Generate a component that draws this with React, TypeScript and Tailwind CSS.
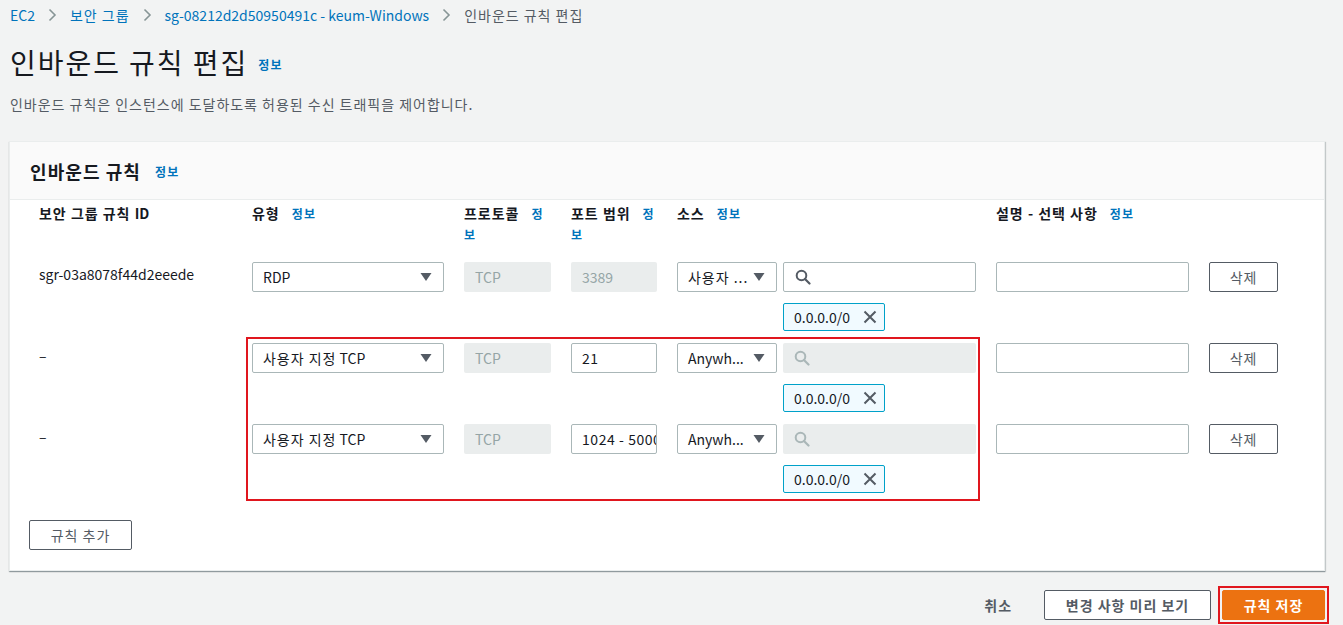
import React from 'react';

// hangul in the reference is set wider than Noto's, so Korean runs get a little tracking
const ko = 'tracking-[0.07em]';

type Rule = {
  id: string;
  type: React.ReactNode;
  port: string;
  portLocked: boolean;
  source: React.ReactNode;
  searchLocked: boolean;
};

const customTcp = (
  <>
    <span className="tracking-[0.07em]">사용자 지정</span> TCP
  </>
);

const rules: Rule[] = [
  { id: 'sgr-03a8078f44d2eeede', type: 'RDP', port: '3389', portLocked: true, source: <span className="tracking-[0.07em]">사용자 ...</span>, searchLocked: false },
  { id: '–', type: customTcp, port: '21', portLocked: false, source: 'Anywh...', searchLocked: true },
  { id: '–', type: customTcp, port: '1024 - 5000', portLocked: false, source: 'Anywh...', searchLocked: true },
];

function Info({ className = '', text = '정보' }: { className?: string; text?: string }) {
  return <span className={`text-[12px] font-bold text-[#0073bb] tracking-[0.1em] ${className}`}>{text}</span>;
}

function Chevron() {
  return (
    <svg width="9" height="14" viewBox="0 0 9 14" className="shrink-0">
      <polyline points="1.5,1.5 7,7 1.5,12.5" fill="none" stroke="#879596" strokeWidth="1.6" />
    </svg>
  );
}

function Caret() {
  return (
    <svg width="12" height="10" viewBox="0 0 12 10" className="shrink-0">
      <polygon points="0.5,1 11.5,1 6,9" fill="#545b64" />
    </svg>
  );
}

function SearchIcon({ color }: { color: string }) {
  return (
    <svg width="16" height="16" viewBox="0 0 16 16" className="shrink-0">
      <circle cx="6.5" cy="6.5" r="4.8" fill="none" stroke={color} strokeWidth="2" />
      <line x1="10" y1="10" x2="14.5" y2="14.5" stroke={color} strokeWidth="2.2" strokeLinecap="round" />
    </svg>
  );
}

function XIcon() {
  return (
    <svg width="14" height="14" viewBox="0 0 14 14" className="shrink-0">
      <path d="M1.5 1.5 L12.5 12.5 M12.5 1.5 L1.5 12.5" stroke="#545b64" strokeWidth="2" fill="none" />
    </svg>
  );
}

function Select({ label, width }: { label: React.ReactNode; width: string }) {
  return (
    <div className={`${width} h-[30px] flex items-center justify-between pl-[10px] pr-[11px] bg-white border border-[#aab7b8] rounded-[2px] text-[14px] text-[#16191f] whitespace-nowrap`}>
      <span>{label}</span>
      <Caret />
    </div>
  );
}

function Token() {
  return (
    <div className="mt-[11px] ml-[106px] w-[102px] h-[28px] flex items-center justify-between pl-[10px] pr-[7px] bg-[#f1faff] border border-[#00a1c9] rounded-[2px] text-[14px] text-[#16191f]">
      <span>0.0.0.0/0</span>
      <XIcon />
    </div>
  );
}

function RuleRow({ rule }: { rule: Rule }) {
  return (
    <div className="grid grid-cols-[203px_192px_87px_86px_299px_193px_69px] gap-x-5 items-start">
      <div className="pl-[10px] pt-[2px] text-[14px] leading-[20px] text-[#16191f]">{rule.id}</div>
      <Select label={rule.type} width="w-[192px]" />
      <div className="h-[30px] flex items-center pl-[11px] bg-[#eaeded] rounded-[2px] text-[14px] text-[#95a5a6]">TCP</div>
      {rule.portLocked ? (
        <div className="h-[30px] flex items-center pl-[11px] bg-[#eaeded] rounded-[2px] text-[14px] text-[#95a5a6]">{rule.port}</div>
      ) : (
        <div className="h-[30px] flex items-center pl-[10px] bg-white border border-[#aab7b8] rounded-[2px] text-[14px] text-[#16191f] whitespace-nowrap overflow-hidden tracking-[0.04em]">
          {rule.port}
        </div>
      )}
      <div className="flex flex-col">
        <div className="flex gap-[6px]">
          <Select label={rule.source} width="w-[100px]" />
          {rule.searchLocked ? (
            <div className="w-[193px] h-[30px] flex items-center pl-[11px] bg-[#eaeded] rounded-[2px]">
              <SearchIcon color="#aab7b8" />
            </div>
          ) : (
            <div className="w-[193px] h-[30px] flex items-center pl-[11px] bg-white border border-[#aab7b8] rounded-[2px]">
              <SearchIcon color="#545b64" />
            </div>
          )}
        </div>
        <Token />
      </div>
      <div className="h-[30px] bg-white border border-[#aab7b8] rounded-[2px]" />
      <button className={`h-[30px] bg-white border border-[#545b64] rounded-[2px] text-[14px] text-[#545b64] ${ko}`}>삭제</button>
    </div>
  );
}

export default function App() {
  return (
    <div className="min-h-screen bg-[#f2f3f3] pl-[9px] pr-[18px] font-['Noto_Sans_CJK_KR','Noto_Sans',sans-serif] text-[#16191f]">
      <nav className="pt-[5px] h-[25px] flex items-center gap-[13px] text-[14px] leading-[20px]">
        <span className="pl-[1px] text-[#0073bb]">EC2</span>
        <Chevron />
        <span className={`text-[#0073bb] ${ko}`}>보안 그룹</span>
        <Chevron />
        <span className="text-[#0073bb]">sg-08212d2d50950491c - keum-Windows</span>
        <Chevron />
        <span className={`text-[#545b64] ${ko}`}>인바운드 규칙 편집</span>
      </nav>

      <div className="mt-[17px] h-[40px] flex items-center pl-[1px]">
        <h1 className={`text-[28px] leading-[40px] font-normal ${ko}`}>인바운드 규칙 편집</h1>
        <Info className="ml-[10px] mt-[6px]" />
      </div>
      <p className={`mt-[12px] pl-[1px] text-[14px] leading-[20px] text-[#545b64] ${ko}`}>
        인바운드 규칙은 인스턴스에 도달하도록 허용된 수신 트래픽을 제어합니다.
      </p>

      <section className="mt-[27px] bg-white border border-[#eaeded] shadow-[0_1px_1px_0_rgba(0,28,36,0.3),1px_1px_1px_0_rgba(0,28,36,0.15)]">
        <header className="h-[58px] flex items-center pl-[20px] bg-[#fafafa] border-b border-[#eaeded]">
          <h2 className="text-[18px] font-bold leading-[24px] tracking-[0.06em]">인바운드 규칙</h2>
          <Info className="ml-[14px] mt-[2px]" />
        </header>

        <div className="pl-[19px] pt-[3px] pb-[20px]">
          <div className={`grid grid-cols-[203px_192px_87px_86px_299px_193px_69px] gap-x-5 text-[14px] leading-[20px] font-bold ${ko}`}>
            <div className="pl-[10px]">
              보안 그룹 규칙 <span className="tracking-normal">ID</span>
            </div>
            <div>
              유형<Info className="ml-[12px]" />
            </div>
            <div>
              프로토콜<Info className="ml-[12px]" text="정" />
              <br />
              <Info text="보" />
            </div>
            <div>
              포트 범위<Info className="ml-[12px]" text="정" />
              <br />
              <Info text="보" />
            </div>
            <div>
              소스<Info className="ml-[12px]" />
            </div>
            <div>
              설명 - 선택 사항<Info className="ml-[12px]" />
            </div>
            <div />
          </div>

          <div className="mt-[17px] flex flex-col gap-[12px]">
            <RuleRow rule={rules[0]} />
            <div className="relative flex flex-col gap-[12px]">
              <RuleRow rule={rules[1]} />
              <RuleRow rule={rules[2]} />
              <div className="absolute left-[217px] -top-[6px] -bottom-[8px] w-[734px] border-2 border-[#e0161e] pointer-events-none" />
            </div>
          </div>

          <button className={`mt-[27px] w-[103px] h-[30px] bg-white border border-[#545b64] rounded-[2px] text-[14px] text-[#545b64] ${ko}`}>
            규칙 추가
          </button>
        </div>
      </section>

      <footer className={`mt-[19px] flex justify-end items-center text-[14px] font-bold ${ko}`}>
        <span className="mr-[32px] text-[#545b64]">취소</span>
        <button className="w-[167px] h-[30px] bg-white border border-[#545b64] rounded-[2px] text-[#545b64] font-bold">
          변경 사항 미리 보기
        </button>
        <div className="relative ml-[11px]">
          <button className="w-[103px] h-[30px] bg-[#ec7211] border border-[#ec7211] rounded-[2px] text-white font-bold">
            규칙 저장
          </button>
          <div className="absolute -inset-[4px] border-2 border-[#e0161e] pointer-events-none" />
        </div>
      </footer>
    </div>
  );
}
